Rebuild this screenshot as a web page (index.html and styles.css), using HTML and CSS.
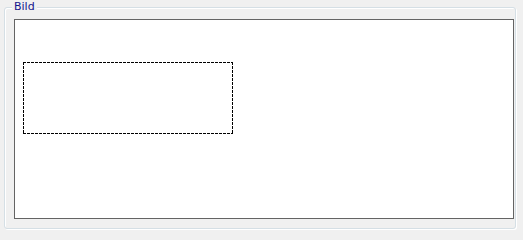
FILE: index.html
```html
<!DOCTYPE html>
<html>
<head>
<meta charset="utf-8">
<link rel="stylesheet" href="styles.css">
</head>
<body>
<div class="group">
  <span class="legend">Bild</span>
  <div class="canvas">
    <svg class="selection" width="210" height="72" viewBox="0 0 210 72">
      <g fill="none" stroke="#000" stroke-width="1" stroke-dasharray="3 1" shape-rendering="crispEdges">
        <line x1="0" y1="0.5" x2="210" y2="0.5"/>
        <line x1="0" y1="71.5" x2="210" y2="71.5"/>
        <line x1="0.5" y1="0" x2="0.5" y2="72"/>
        <line x1="209.5" y1="0" x2="209.5" y2="72"/>
      </g>
    </svg>
  </div>
</div>
</body>
</html>
```
FILE: styles.css
```css
html, body {
  margin: 0;
  padding: 0;
  background: #f0f0f0;
  width: 523px;
  height: 237px;
  overflow: hidden;
}
body {
  padding: 7px 0 0 4px;
  box-sizing: border-box;
}
.group {
  position: relative;
  width: 512px;
  height: 222px;
  box-sizing: border-box;
  border: 1px solid #d5dfe5;
  border-radius: 3px;
  box-shadow: inset 1px 1px 0 #ffffff, 1px 1px 0 #ffffff;
  padding: 11px 0 0 9px;
}
.legend {
  position: absolute;
  left: 7px;
  top: -8px;
  padding: 0 2px;
  background: #f0f0f0;
  font-family: "DejaVu Sans", "Liberation Sans", sans-serif;
  font-size: 11px;
  line-height: 13px;
  color: #15158c;
}
.canvas {
  width: 500px;
  height: 200px;
  box-sizing: border-box;
  border: 1px solid #646464;
  background: #ffffff;
  padding: 42px 0 0 8px;
}
.selection {
  display: block;
}
```
